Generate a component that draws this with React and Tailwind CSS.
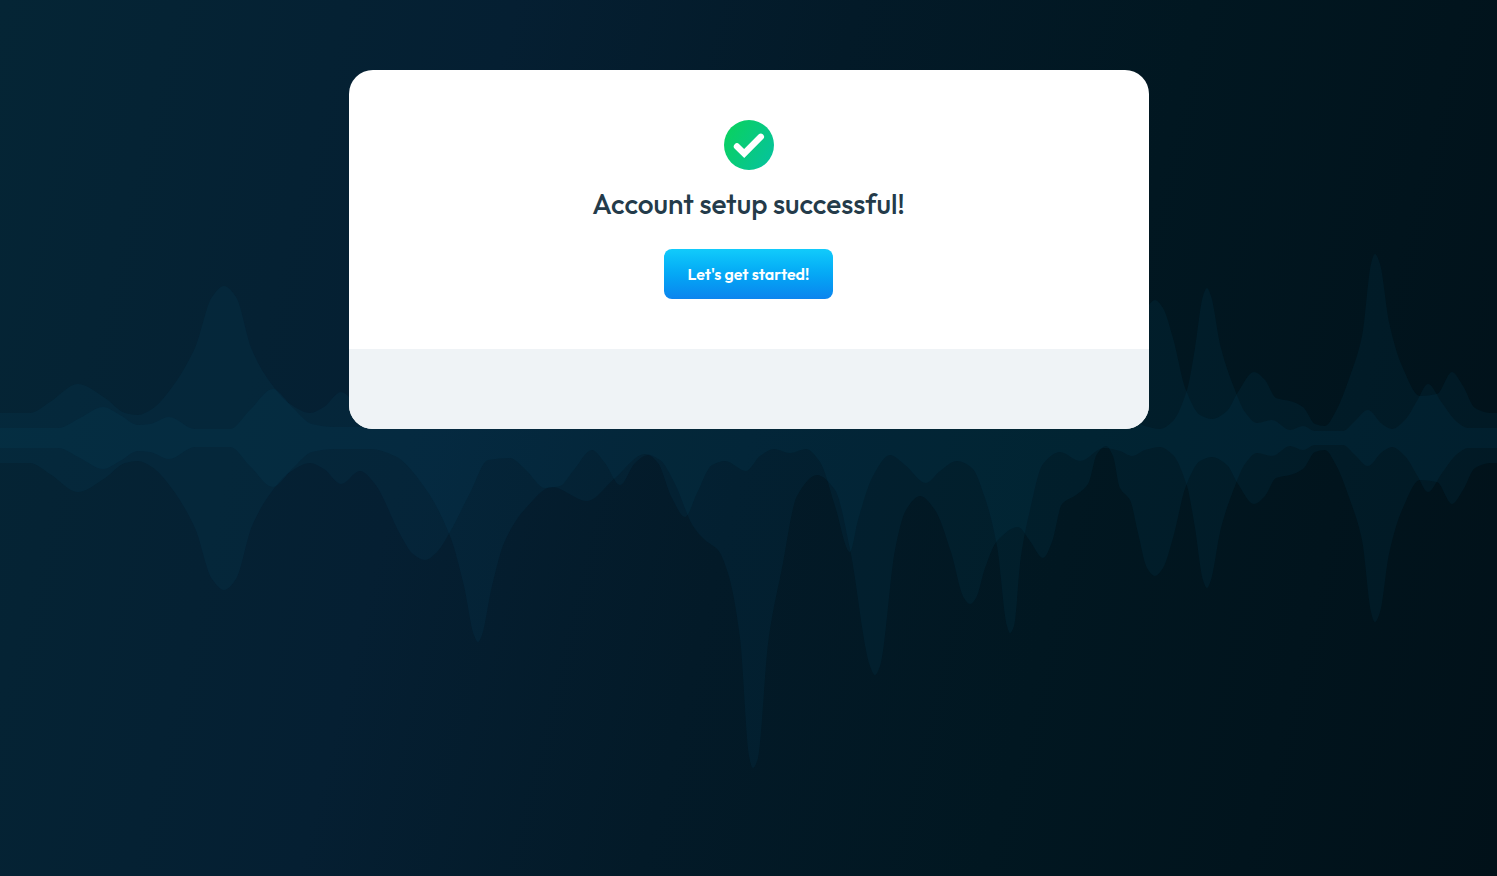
import { useId } from "react";

const WAVE_WIDTH = 1497;
const WAVE_CENTER = 438;

// [x, distance from the center line]
const frontWave = [
  [0, 10], [58, 10], [80, 20], [103, 31], [120, 23], [138, 13], [150, 14],
  [169, 21], [195, 9], [230, 9], [250, 28], [273, 49], [293, 30], [312, 14],
  [335, 11], [370, 11], [395, 18], [425, 50], [450, 98], [464, 148],
  [474, 197], [478, 204], [482, 197], [492, 148], [504, 105], [525, 71],
  [552, 49], [587, 63], [615, 40], [645, 16], [660, 22], [675, 46],
  [693, 88], [705, 102], [718, 112], [728, 135], [740, 200], [749, 318],
  [753, 330], [758, 320], [768, 206], [782, 130], [797, 58], [817, 37],
  [835, 52], [850, 111], [870, 228], [875, 237], [880, 228], [895, 112],
  [906, 72], [920, 58], [935, 72], [951, 114], [964, 160], [970, 166],
  [976, 160], [985, 130], [997, 103], [1018, 89], [1030, 103], [1043, 120],
  [1052, 104], [1062, 66], [1076, 57], [1088, 46], [1097, 16], [1106, 8],
  [1113, 18], [1120, 50], [1130, 62], [1138, 95], [1147, 130], [1155, 138],
  [1163, 130], [1173, 100], [1186, 48], [1200, 23], [1212, 19], [1227, 27],
  [1238, 46], [1254, 66], [1265, 58], [1276, 40], [1290, 37], [1303, 31],
  [1315, 14], [1325, 12], [1336, 27], [1350, 62], [1362, 102], [1371, 174],
  [1375, 184], [1380, 174], [1389, 116], [1402, 72], [1420, 42], [1437, 44],
  [1452, 66], [1463, 52], [1475, 30], [1490, 25], [1497, 25],
];

const backWave = [
  [0, 25], [30, 25], [50, 36], [78, 54], [105, 40], [125, 25], [138, 23],
  [152, 29], [170, 48], [195, 90], [212, 141], [224, 152], [236, 141],
  [252, 88], [270, 56], [290, 34], [310, 25], [324, 31], [341, 46], [360, 33],
  [375, 46], [400, 96], [413, 116], [425, 122], [437, 114], [450, 94],
  [470, 55], [488, 22], [510, 20], [525, 31], [545, 50], [560, 48], [573, 33],
  [592, 12], [605, 25], [620, 47], [635, 25], [648, 17], [658, 25],
  [672, 60], [685, 79], [697, 55], [712, 27], [725, 23], [746, 33],
  [760, 18], [774, 11], [790, 15], [806, 11], [820, 24], [835, 68],
  [850, 114], [858, 82], [873, 38], [890, 17], [905, 27], [926, 45],
  [940, 33], [957, 23], [972, 30], [985, 60], [997, 108], [1007, 188],
  [1010, 195], [1014, 188], [1021, 118], [1030, 72], [1043, 26], [1060, 14],
  [1080, 23], [1104, 10], [1120, 13], [1132, 18], [1145, 12], [1160, 9],
  [1173, 17], [1187, 48], [1195, 90], [1203, 142], [1207, 150], [1211, 142],
  [1221, 90], [1235, 48], [1245, 26], [1257, 15], [1272, 18], [1290, 8],
  [1303, 12], [1315, 7], [1343, 7], [1354, 16], [1368, 28], [1382, 14],
  [1392, 9], [1405, 18], [1417, 37], [1428, 54], [1442, 35], [1457, 16],
  [1468, 10], [1497, 10],
];

function getSlopes(points) {
  return points.map(([x, y], i) => {
    if (i === 0 || i === points.length - 1) return 0;
    const [px, py] = points[i - 1];
    const [nx, ny] = points[i + 1];
    const before = (y - py) / (x - px);
    const after = (ny - y) / (nx - x);
    // peaks and valleys stay flat so the curve never overshoots
    if (before * after <= 0) return 0;
    return (2 * before * after) / (before + after);
  });
}

function curve(points) {
  const slopes = getSlopes(points);
  return points
    .slice(1)
    .map(([x, y], i) => {
      const [px, py] = points[i];
      const third = (x - px) / 3;
      return `C${px + third} ${py + slopes[i] * third} ${x - third} ${y - slopes[i + 1] * third} ${x} ${y}`;
    })
    .join("");
}

function wavePath(wave) {
  const lower = wave.map(([x, size]) => [x, WAVE_CENTER + size]);
  const upper = wave.map(([x, size]) => [x, WAVE_CENTER - size]).reverse();
  return `M0 ${lower[0][1]}${curve(lower)}L${WAVE_WIDTH} ${upper[0][1]}${curve(upper)}Z`;
}

function SoundWaves() {
  return (
    <svg
      viewBox="0 0 1497 876"
      preserveAspectRatio="xMidYMid slice"
      className="absolute inset-0 h-full w-full"
      aria-hidden="true"
    >
      <path d={wavePath(backWave)} fill="#0b5070" fillOpacity="0.12" />
      <path d={wavePath(frontWave)} fill="#0b5070" fillOpacity="0.12" />
    </svg>
  );
}

function SuccessIcon() {
  const gradientId = useId();

  return (
    <svg viewBox="0 0 50 50" className="size-[50px]" aria-hidden="true">
      <defs>
        <linearGradient id={gradientId} x1="0" y1="0.2" x2="1" y2="0.8">
          <stop offset="0" stopColor="#0ad15f" />
          <stop offset="1" stopColor="#06c39c" />
        </linearGradient>
      </defs>
      <circle cx="25" cy="25" r="25" fill={`url(#${gradientId})`} />
      <path
        d="M13 26.5L20.2 33.5L36.8 16.8"
        fill="none"
        stroke="#fff"
        strokeWidth="6.4"
        strokeLinecap="round"
      />
    </svg>
  );
}

export default function App() {
  return (
    <div className="relative min-h-screen bg-[linear-gradient(104deg,#052535_0%,#051f32_30%,#031a28_50%,#011721_70%,#011119_100%)] px-4 py-[70px] font-['Outfit','Lato',sans-serif]">
      <SoundWaves />

      {/* Card */}
      <main className="relative mx-auto max-w-[800px] overflow-hidden rounded-3xl bg-white">
        <div className="flex flex-col items-center px-6 py-[50px] text-center">
          <SuccessIcon />
          <h1 className="mt-4 text-[28px] leading-9 font-medium text-[#243b4a]">
            Account setup successful!
          </h1>
          <button
            type="button"
            className="mt-[27px] h-[50px] cursor-pointer rounded-lg bg-linear-to-b from-[#12cbfb] to-[#0d84ee] px-6 text-base font-semibold text-white"
          >
            Let's get started!
          </button>
        </div>

        {/* Footer */}
        <div className="h-20 bg-[#eff3f6]" />
      </main>
    </div>
  );
}
